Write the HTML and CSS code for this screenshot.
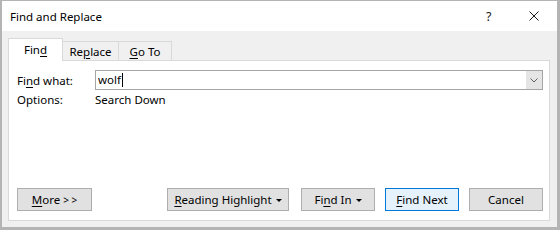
FILE: index.html
```html
<!DOCTYPE html>
<html>
<head>
<meta charset="utf-8">
<link rel="stylesheet" href="styles.css">
</head>
<body>
<div class="window">
  <div class="titlebar">
    <span class="title">Find and Replace</span>
    <span class="help">?</span>
    <span class="close">
      <svg width="10" height="10" viewBox="0 0 10 10"><path d="M0.5 0.5L9.5 9.5M9.5 0.5L0.5 9.5" stroke="#1a1a1a" stroke-width="1" fill="none"/></svg>
    </span>
  </div>
  <div class="content">
    <div class="tabs">
      <div class="tab active">Fin<u>d</u></div>
      <div class="tab">Re<u>p</u>lace</div>
      <div class="tab"><u>G</u>o To</div>
    </div>
    <div class="panel">
      <div class="row find-row">
        <label class="label">Fi<u>n</u>d what:</label>
        <div class="combo">
          <div class="combo-text">wolf<span class="caret"></span></div>
          <div class="combo-btn">
            <svg width="8" height="5" viewBox="0 0 8 5"><path d="M0.5 0.5L4 4L7.5 0.5" stroke="#606060" stroke-width="1" fill="none"/></svg>
          </div>
        </div>
      </div>
      <div class="row options-row">
        <span class="label">Options:</span>
        <span class="value">Search Down</span>
      </div>
      <div class="buttons">
        <button class="btn more"><u>M</u>ore <span class="gt">&gt; &gt;</span></button>
        <div class="right-buttons">
          <button class="btn reading"><u>R</u>eading Highlight<span class="tri"></span></button>
          <button class="btn findin">Fi<u>n</u>d In<span class="tri"></span></button>
          <button class="btn primary"><u>F</u>ind Next</button>
          <button class="btn">Cancel</button>
        </div>
      </div>
    </div>
  </div>
</div>
</body>
</html>
```
FILE: styles.css
```css
* { box-sizing: border-box; }
html, body { margin: 0; padding: 0; }
body {
  font-family: "Noto Sans", "Open Sans", sans-serif;
  font-size: 11.5px;
  color: #000;
  background: #fff;
}
u { text-decoration: underline; text-underline-offset: 2px; text-decoration-thickness: 1px; }
.window {
  width: 560px;
  height: 230px;
  background: #f0f0f0;
  border-style: solid;
  border-color: #b4b4b4;
  border-width: 1px 3px 3px 2px;
  display: flex;
  flex-direction: column;
}
.titlebar {
  height: 30px;
  background: #fff;
  display: flex;
  align-items: center;
  padding-left: 8px;
  flex-shrink: 0;
}
.title { flex: 1; font-size: 11.5px; padding-top: 1px; }
.help { width: 10px; margin-right: 33px; color: #1a1a1a; font-size: 12.5px; }
.close { width: 10px; height: 10px; margin-right: 18px; display: flex; }
.content {
  padding: 7px 7px 0 6px;
  flex: 1;
  display: flex;
  flex-direction: column;
}
.tabs {
  display: flex;
  align-items: flex-end;
  height: 22px;
  position: relative;
  z-index: 1;
}
.tab {
  height: 19px;
  border: 1px solid #d9d9d9;
  border-bottom: none;
  border-left: none;
  background: #f0f0f0;
  display: flex;
  align-items: center;
  justify-content: center;
}
.tab:nth-child(2) { width: 56px; }
.tab:nth-child(3) { width: 53px; }
.tab.active {
  width: 55px;
  background: #fff;
  border-left: 1px solid #d9d9d9;
  border-right: 1px solid #d9d9d9;
  margin-bottom: -1px;
  height: 23px;
  padding-bottom: 1px;
}
.panel {
  height: 161px;
  background: #fff;
  border: 1px solid #d9d9d9;
  padding: 9px 6px 9px 8px;
  display: flex;
  flex-direction: column;
}
.row { display: flex; align-items: center; }
.label { width: 78px; }
.find-row { height: 20px; }
.combo {
  flex: 1;
  height: 20px;
  border: 1px solid #a5a5a5;
  display: flex;
}
.combo-text { flex: 1; padding-left: 2px; display: flex; align-items: center; line-height: 16px; }
.caret { display: inline-block; width: 1px; height: 14px; background: #000; margin-left: 1px; }
.combo-btn {
  width: 16px;
  background: #e5e5e5;
  display: flex;
  align-items: center;
  justify-content: center;
}
.options-row { height: 16px; margin-top: 1px; }
.buttons {
  margin-top: auto;
  display: flex;
  justify-content: space-between;
}
.right-buttons { display: flex; gap: 10px; }
.btn {
  font-family: inherit;
  font-size: 11.5px;
  color: #000;
  height: 23px;
  width: 74px;
  background: #e1e1e1;
  border: 1px solid #adadad;
  padding: 0;
  margin: 0;
  display: flex;
  align-items: center;
  justify-content: center;
}
.gt { font-size: 10px; margin-left: 3px; }
.more { width: 75px; }
.reading { width: 122px; margin-right: 2px; }
.btn.primary { background: #e5f1fb; border-color: #0078d7; }
.tri {
  display: inline-block;
  width: 0; height: 0;
  border-left: 3px solid transparent;
  border-right: 3px solid transparent;
  border-top: 3px solid #000;
  margin-left: 4px;
  margin-top: 1px;
}
```
